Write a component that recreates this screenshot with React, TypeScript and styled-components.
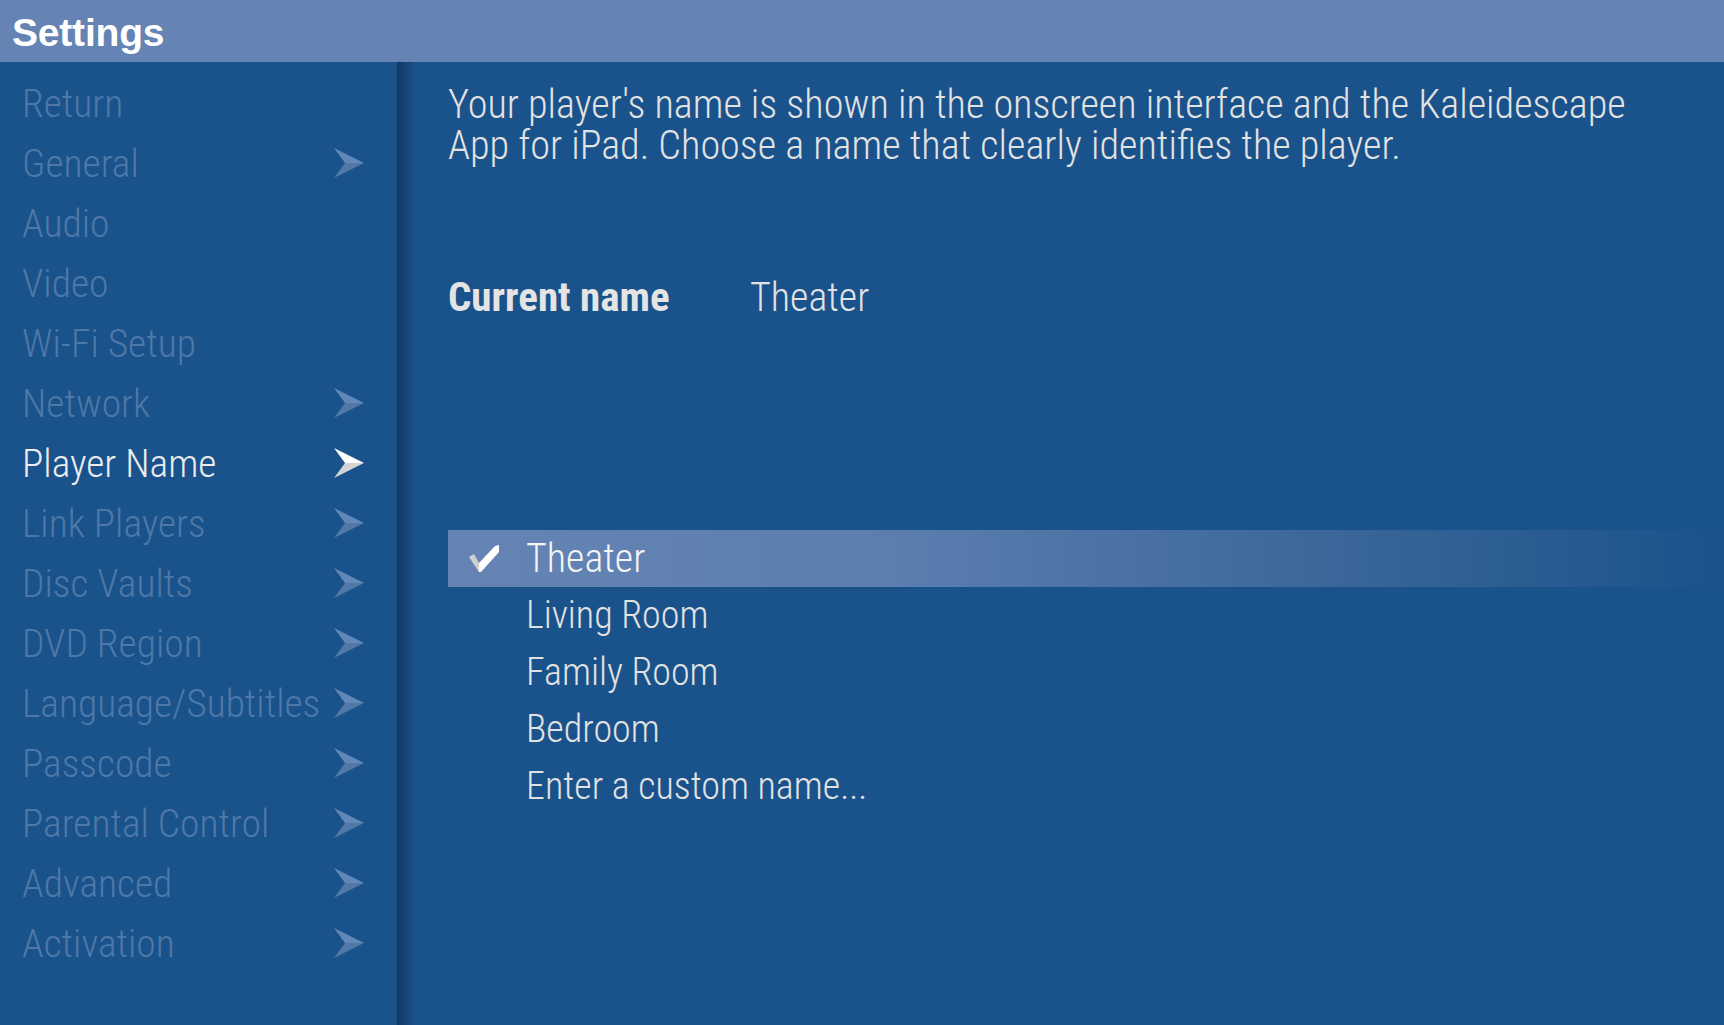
import React from "react";
import styled, { createGlobalStyle } from "styled-components";

const GlobalStyle = createGlobalStyle`
  html, body {
    margin: 0;
    padding: 0;
    background: #1a528b;
  }
  * {
    box-sizing: border-box;
  }
`;

const condensed = `"Roboto Condensed", "Liberation Sans Narrow", "DejaVu Sans Condensed", "Liberation Sans", sans-serif`;

const menu = [
  { label: "Return", sub: false },
  { label: "General", sub: true },
  { label: "Audio", sub: false },
  { label: "Video", sub: false },
  { label: "Wi-Fi Setup", sub: false },
  { label: "Network", sub: true },
  { label: "Player Name", sub: true, active: true },
  { label: "Link Players", sub: true },
  { label: "Disc Vaults", sub: true },
  { label: "DVD Region", sub: true },
  { label: "Language/Subtitles", sub: true },
  { label: "Passcode", sub: true },
  { label: "Parental Control", sub: true },
  { label: "Advanced", sub: true },
  { label: "Activation", sub: true },
];

const names = ["Theater", "Living Room", "Family Room", "Bedroom", "Enter a custom name..."];

function Chevron({ active }: { active?: boolean }) {
  return (
    <ChevronIcon viewBox="0 0 30 30">
      <polygon points="0,0 30,15 11,15" fill={active ? "#ffffff" : "#6189b7"} />
      <polygon points="11,15 30,15 0,30" fill={active ? "#d4d4d4" : "#5079a8"} />
    </ChevronIcon>
  );
}

function Check() {
  return (
    <CheckIcon viewBox="0 0 31 28">
      <polygon points="0,12 5,9 10,18 10,27" fill="#cfcfcf" />
      <polygon points="10,18 26,1 30,0 30,7 12,27 10,27" fill="#ffffff" />
    </CheckIcon>
  );
}

function App() {
  return (
    <>
      <GlobalStyle />
      <Page>
        <Header>
          <Title>Settings</Title>
        </Header>

        <Body>
          <Sidebar>
            {menu.map((item) => (
              <MenuItem key={item.label} $active={item.active}>
                <MenuLabel>{item.label}</MenuLabel>
                {item.sub && <Chevron active={item.active} />}
              </MenuItem>
            ))}
          </Sidebar>

          <Content>
            <Intro>
              Your player's name is shown in the onscreen interface and the Kaleidescape
              <br />
              App for iPad. Choose a name that clearly identifies the player.
            </Intro>

            <CurrentRow>
              <CurrentLabel>Current name</CurrentLabel>
              <CurrentValue>Theater</CurrentValue>
            </CurrentRow>

            <Options>
              {names.map((name, i) => (
                <Option key={name} $selected={i === 0}>
                  <CheckSlot>{i === 0 && <Check />}</CheckSlot>
                  <OptionLabel $selected={i === 0}>{name}</OptionLabel>
                </Option>
              ))}
            </Options>
          </Content>
        </Body>
      </Page>
    </>
  );
}

const Page = styled.div`
  display: flex;
  flex-direction: column;
  min-height: 100vh;
  background: #1a528b;
  font-family: ${condensed};
  font-weight: 300;
`;

const Header = styled.header`
  height: 62px;
  background: #6583b3;
  display: flex;
  align-items: center;
  padding-left: 12px;
`;

const Title = styled.h1`
  margin: 0;
  font-family: "Liberation Sans", Arial, sans-serif;
  font-weight: 700;
  font-size: 39px;
  letter-spacing: -0.2px;
  color: #ffffff;
  line-height: 1;
  padding-top: 2px;
`;

const Body = styled.div`
  flex: 1;
  display: flex;
`;

const Sidebar = styled.nav`
  width: 397px;
  flex-shrink: 0;
  padding-top: 12px;
  background: #1a528b;
`;

const MenuItem = styled.div<{ $active?: boolean }>`
  height: 60px;
  display: flex;
  align-items: center;
  justify-content: space-between;
  padding: 0 33px 0 22px;
  color: ${(p) => (p.$active ? "#ececec" : "#4e78a7")};
`;

const MenuLabel = styled.span`
  font-size: 39.5px;
  line-height: 60px;
  white-space: nowrap;
`;

const ChevronIcon = styled.svg`
  width: 30px;
  height: 30px;
  flex-shrink: 0;
  margin-top: -2px;
`;

const Content = styled.main`
  flex: 1;
  padding: 22px 0 0 51px;
  background: linear-gradient(to right, rgba(8, 30, 60, 0.5), rgba(8, 30, 60, 0) 18px), #1a528b;
  color: #e2e2e2;
`;

const Intro = styled.p`
  margin: 0;
  font-size: 40.2px;
  line-height: 41px;
  white-space: nowrap;
`;

const CurrentRow = styled.div`
  margin-top: 111px;
  display: flex;
  align-items: baseline;
  line-height: 41px;
`;

const CurrentLabel = styled.span`
  width: 302px;
  font-size: 41px;
  font-weight: 700;
  color: #e4e4e4;
`;

const CurrentValue = styled.span`
  font-size: 40px;
  color: #e2e2e2;
`;

const Options = styled.div`
  margin-top: 212px;
  display: flex;
  flex-direction: column;
`;

const Option = styled.div<{ $selected?: boolean }>`
  height: 57px;
  display: flex;
  align-items: center;
  background: ${(p) =>
    p.$selected
      ? "linear-gradient(to right, #6584b4 0%, #5b7eaf 35%, #3a6699 70%, #1a528b 100%)"
      : "transparent"};
  color: ${(p) => (p.$selected ? "#f4f4f4" : "#e2e2e2")};
`;

const CheckSlot = styled.div`
  width: 78px;
  display: flex;
  align-items: center;
  padding-left: 21px;
`;

const CheckIcon = styled.svg`
  width: 31px;
  height: 28px;
`;

const OptionLabel = styled.span<{ $selected?: boolean }>`
  font-size: ${(p) => (p.$selected ? "40px" : "38px")};
  line-height: 57px;
  white-space: nowrap;
`;

export default App;
